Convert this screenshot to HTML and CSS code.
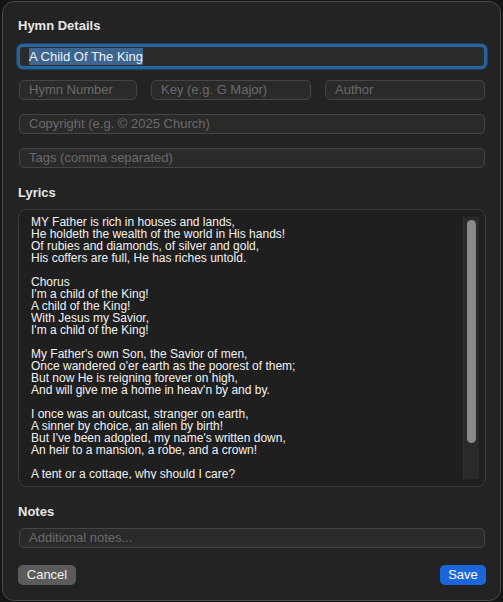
FILE: index.html
```html
<!DOCTYPE html>
<html>
<head>
<meta charset="utf-8">
<link rel="stylesheet" href="styles.css">
</head>
<body>
<div class="window">
  <div class="label">Hymn Details</div>
  <div class="field field-focus"><span class="sel">A Child Of The King</span></div>
  <div class="row">
    <div class="field placeholder">Hymn Number</div>
    <div class="field placeholder">Key (e.g. G Major)</div>
    <div class="field placeholder">Author</div>
  </div>
  <div class="field placeholder gap">Copyright (e.g. © 2025 Church)</div>
  <div class="field placeholder gap">Tags (comma separated)</div>
  <div class="label lyrics-label">Lyrics</div>
  <div class="lyrics-box">
    <div class="lyrics-scroll"><div class="lyrics-text">MY Father is rich in houses and lands,
He holdeth the wealth of the world in His hands!
Of rubies and diamonds, of silver and gold,
His coffers are full, He has riches untold.

Chorus
I'm a child of the King!
A child of the King!
With Jesus my Savior,
I'm a child of the King!

My Father's own Son, the Savior of men,
Once wandered o'er earth as the poorest of them;
But now He is reigning forever on high,
And will give me a home in heav'n by and by.

I once was an outcast, stranger on earth,
A sinner by choice, an alien by birth!
But I've been adopted, my name's written down,
An heir to a mansion, a robe, and a crown!

A tent or a cottage, why should I care?
They're building a palace for me over there;
Though exiled from home, yet still may I sing:
All glory to God, I'm a child of the King.</div></div>
    <div class="track"><div class="thumb"></div></div>
  </div>
  <div class="label notes-label">Notes</div>
  <div class="field placeholder notes">Additional notes...</div>
  <div class="buttons">
    <div class="btn btn-cancel">Cancel</div>
    <div class="btn btn-save">Save</div>
  </div>
</div>
</body>
</html>
```

FILE: styles.css
```css
html, body {
  margin: 0;
  padding: 0;
  background: #151515;
}
body {
  font-family: "Liberation Sans", Arial, sans-serif;
  width: 503px;
  height: 602px;
  overflow: hidden;
}
.window {
  box-sizing: border-box;
  margin: 1px 0 0 2px;
  width: 499px;
  height: 600px;
  border: 1px solid #4a4a4a;
  border-radius: 12px;
  background: #232323;
  padding: 16px 0 0 15px;
  display: flex;
  flex-direction: column;
}
.label {
  width: 468px;
  font-size: 13px;
  font-weight: bold;
  line-height: 16px;
  height: 16px;
  color: #e6e6e6;
}
.field {
  box-sizing: border-box;
  margin: 0 1px;
  width: 466px;
  height: 20px;
  border: 1px solid #454545;
  border-radius: 5px;
  background: #2a2a2a;
  font-size: 13px;
  line-height: 18px;
  padding: 0 9px;
  color: #e8e8e8;
  white-space: nowrap;
  overflow: hidden;
}
.field-focus {
  margin-top: 12px;
  height: 21px;
  line-height: 19px;
  border: 1px solid #2a6aa3;
  box-shadow: 0 0 0 2.5px #23649e;
  background: #2b2b2b;
  border-radius: 4px;
}
.sel {
  background: #3d6590;
  color: #eef2f7;
  padding: 1px 0 1px 0;
}
.placeholder {
  color: #6a6a6a;
}
.row {
  margin: 13px 1px 0;
  width: 466px;
  display: grid;
  grid-template-columns: 118px 160px 160px;
  column-gap: 14px;
}
.row .field {
  width: auto;
  margin: 0;
}
.gap {
  margin-top: 14px;
}
.lyrics-label {
  margin-top: 17px;
}
.lyrics-box {
  box-sizing: border-box;
  margin-top: 8px;
  width: 468px;
  height: 278px;
  border: 1px solid #3b3b3b;
  border-radius: 8px;
  background: #1f1f1f;
  padding: 7px 6px 7px 7px;
  display: flex;
}
.lyrics-scroll {
  flex: 1;
  height: 262px;
  overflow: hidden;
}
.lyrics-text {
  white-space: pre-line;
  font-size: 12px;
  line-height: 12px;
  color: #f2f2f2;
  padding: 0 0 6px 5px;
  margin-top: -1px;
}
.track {
  box-sizing: border-box;
  width: 16px;
  height: 262px;
  background: #2a2a2a;
  border-left: 1px solid #333333;
  padding: 3px 3px 0 3px;
}
.thumb {
  width: 9px;
  height: 223px;
  border-radius: 5px;
  background: #8a8a8a;
}
.notes-label {
  margin-top: 17px;
}
.notes {
  margin-top: 8px;
}
.buttons {
  margin-top: 17px;
  width: 468px;
  display: flex;
  justify-content: space-between;
}
.btn {
  box-sizing: border-box;
  height: 20px;
  border-radius: 5px;
  font-size: 13px;
  line-height: 20px;
  color: #f2f2f2;
  text-align: center;
}
.btn-cancel {
  width: 58px;
  background: #5b5b5b;
}
.btn-save {
  width: 46px;
  background: #1b66dc;
  color: #ffffff;
}
```
